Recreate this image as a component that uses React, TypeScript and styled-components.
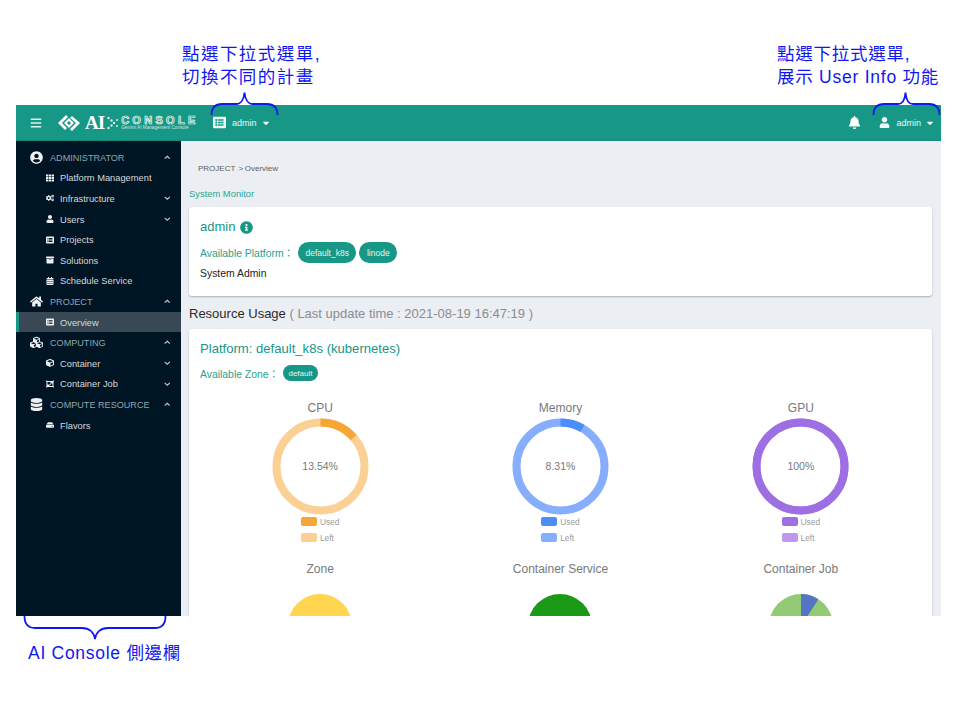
import React from "react";
import styled, { createGlobalStyle } from "styled-components";
import {
  FaBars, FaBell, FaCaretDown, FaChevronDown, FaChevronUp, FaCogs, FaCube, FaCubes, FaDatabase,
  FaHome, FaInfoCircle, FaListAlt, FaObjectGroup, FaTh, FaUser, FaUserCircle, FaArchive, FaCalendarAlt, FaHdd,
} from "react-icons/fa";

const TEAL = "#179786";
const INK = "#1018f0";
const SANS = `"Liberation Sans", "Noto Sans CJK TC", sans-serif`;

const Global = createGlobalStyle`
  html, body { margin: 0; padding: 0; background: #fff; }
  * { box-sizing: border-box; }
  body { font-family: ${SANS}; }
`;

const Page = styled.div`
  position: relative;
  width: 960px;
  height: 720px;
  overflow: hidden;
  background: #fff;
`;
const TopNotes = styled.div`
  height: 105px;
  display: flex;
  justify-content: space-between;
  padding: 43px 21px 0 182px;
`;
const Note = styled.div`
  color: ${INK};
  font-size: 17.5px;
  line-height: 23px;
  letter-spacing: 1.45px;
  white-space: pre-line;
`;
const RightNote = styled(Note)`
  width: 162px;
  letter-spacing: 0.75px;
  white-space: pre;
`;
const BottomNote = styled(Note)`
  padding: 26px 0 0 28px;
  letter-spacing: 0.72px;
`;
const Brace = styled.svg<{ $left: number; $top: number }>`
  position: absolute;
  left: ${(p) => p.$left}px;
  top: ${(p) => p.$top}px;
  z-index: 2;
  overflow: visible;
`;
const Frame = styled.div`
  margin: 0 19px 0 16px;
  height: 511px;
  display: flex;
  flex-direction: column;
  overflow: hidden;
`;
const Header = styled.header`
  height: 36px;
  flex: none;
  background: ${TEAL};
  display: flex;
  align-items: center;
  color: #fff;
  padding: 0 6px 0 14px;
  border-bottom: 1px solid #168c7c;
`;
const Burger = styled(FaBars)`
  width: 12px;
  height: 12px;
  color: #dff1ee;
  margin-right: 16px;
`;
const Logo = styled.div`
  display: flex;
  align-items: center;
  width: 156px;
  flex: none;
  margin-left: -1px;
`;
const LogoAI = styled.span`
  font-family: "Liberation Serif", serif;
  font-weight: 700;
  font-size: 19px;
  letter-spacing: -1px;
  margin: 0 3px 0 4px;
`;
const LogoWords = styled.div`
  display: flex;
  flex-direction: column;
  margin-left: 3px;
`;
const LogoTitle = styled.span`
  font-size: 11px;
  line-height: 10px;
  font-weight: 700;
  letter-spacing: 3.3px;
  color: transparent;
  -webkit-text-stroke: 0.7px #fff;
`;
const LogoSub = styled.span`
  font-size: 4.7px;
  line-height: 5px;
  color: #cfe9e4;
  white-space: nowrap;
`;
const Picker = styled.div`
  display: flex;
  align-items: center;
  font-size: 9px;
  color: #f0f8f7;
`;
const PickerIcon = styled(FaListAlt)`
  width: 13px;
  height: 13px;
  margin-right: 6px;
`;
const Caret = styled(FaCaretDown)`
  width: 10px;
  height: 10px;
  margin-left: 4px;
`;
const Spacer = styled.div`
  flex: 1;
`;
const Bell = styled(FaBell)`
  width: 13px;
  height: 13px;
  margin-right: 18px;
`;
const Avatar = styled(FaUser)`
  width: 11px;
  height: 11px;
  margin-right: 6px;
`;
const Body = styled.div`
  flex: 1;
  display: flex;
  min-height: 0;
`;
const Side = styled.nav`
  width: 165px;
  flex: none;
  background: #001524;
  padding-top: 6px;
`;
const Row = styled.div<{ $active?: boolean; $child?: boolean }>`
  height: 20.6px;
  display: flex;
  align-items: center;
  padding-left: ${(p) => (p.$child ? "29px" : "14px")};
  padding-right: 11px;
  border-left: ${(p) => (p.$active ? `3px solid ${TEAL}` : "0")};
  ${(p) => p.$active && "padding-left: 26px;"}
  background: ${(p) => (p.$active ? "#384955" : "transparent")};
  color: ${(p) => (p.$child ? "#d5d9dc" : "#8ea6b2")};
  font-size: ${(p) => (p.$child ? "9.3px" : "9.1px")};
  white-space: nowrap;
`;
const IconSlot = styled.span<{ $child?: boolean }>`
  width: ${(p) => (p.$child ? "10px" : "13px")};
  flex: none;
  margin-right: ${(p) => (p.$child ? "5px" : "7px")};
  display: flex;
  justify-content: center;
  color: #eef1f3;
  font-size: ${(p) => (p.$child ? "8px" : "13px")};
`;
const RowLabel = styled.span`
  flex: 1;
  padding-top: 1px;
`;
const Chevron = styled.span`
  color: #d5d9dc;
  font-size: 6.5px;
  display: flex;
`;
const Main = styled.main`
  flex: 1;
  min-width: 0;
  background: #ebeef3;
  padding: 22px 9px 0 8px;
`;
const Crumb = styled.div`
  font-size: 8px;
  line-height: 12px;
  color: #5a5e63;
  padding-left: 9px;
  word-spacing: -0.6px;
`;
const MonitorLink = styled.div`
  margin-top: 13px;
  font-size: 9.4px;
  line-height: 12px;
  color: #2ea594;
`;
const Card = styled.section`
  background: #fff;
  border-radius: 3px;
  box-shadow: 0 1px 2px rgba(0, 0, 0, 0.28);
`;
const ProfileCard = styled(Card)`
  margin-top: 7px;
  padding: 12px 11px 16px;
`;
const UsageCard = styled(Card)`
  margin-top: 7px;
  padding: 12px 11px 0;
`;
const CardName = styled.div`
  display: flex;
  align-items: center;
  font-size: 13px;
  line-height: 16px;
  color: ${TEAL};
`;
const InfoIcon = styled(FaInfoCircle)`
  width: 13px;
  height: 13px;
  margin-left: 5px;
`;
const ChipRow = styled.div`
  display: flex;
  align-items: center;
  margin-top: 7px;
  font-size: 10.4px;
  color: #2a9f8f;
`;
const ZoneRow = styled(ChipRow)`
  margin-top: 8px;
`;
const Chip = styled.span<{ $small?: boolean }>`
  height: ${(p) => (p.$small ? 16 : 21)}px;
  padding: 0 ${(p) => (p.$small ? 5.5 : 7.5)}px;
  border-radius: 11px;
  background: ${TEAL};
  color: #e6f5f2;
  font-size: ${(p) => (p.$small ? 8 : 8.5)}px;
  display: flex;
  align-items: center;
  margin-left: 3px;
`;
const ChipLabel = styled.span`
  margin-right: 1px;
`;
const Role = styled.div`
  margin-top: 5px;
  font-size: 10.4px;
  line-height: 12px;
  color: #222;
`;
const UsageHead = styled.div`
  margin-top: 10px;
  font-size: 13px;
  line-height: 16px;
  color: #2b2b2b;
`;
const UsageTime = styled.span`
  color: #8a8d90;
`;
const PlatformName = styled.div`
  font-size: 13.1px;
  line-height: 16px;
  color: ${TEAL};
`;
const Charts = styled.div`
  display: grid;
  grid-template-columns: repeat(3, 1fr);
  row-gap: 19px;
  margin-top: 19px;
`;
const Chart = styled.div`
  display: flex;
  flex-direction: column;
  align-items: center;
`;
const ChartTitle = styled.div`
  font-size: 12px;
  line-height: 14px;
  padding-top: 1px;
  color: #77797c;
`;
const DonutBox = styled.div`
  position: relative;
  width: 97px;
  height: 97px;
  margin-top: 3px;
`;
const DonutValue = styled.div`
  position: absolute;
  inset: 0 0 2px;
  display: flex;
  align-items: center;
  justify-content: center;
  font-size: 10.5px;
  color: #77797c;
`;
const Legend = styled.div`
  margin-top: 2px;
  display: grid;
  grid-auto-rows: 9px;
  row-gap: 7px;
`;
const LegendRow = styled.div`
  display: flex;
  align-items: center;
  font-size: 8.4px;
  color: #9a9c9e;
`;
const Swatch = styled.span<{ $color: string }>`
  width: 16px;
  height: 9px;
  border-radius: 2px;
  background: ${(p) => p.$color};
  margin-right: 3px;
`;
const PieSvg = styled.svg`
  margin-top: 18px;
  display: block;
`;

const ArcDonut = ({ used, usedColor, leftColor, label }: { used: number; usedColor: string; leftColor: string; label: string }) => {
  const r = 44;
  const c = 2 * Math.PI * r;
  return (
    <>
      <DonutBox>
        <svg width="97" height="97" viewBox="0 0 97 97">
          <circle cx="48.5" cy="48.5" r={r} fill="none" stroke={leftColor} strokeWidth="8" />
          <circle
            cx="48.5" cy="48.5" r={r} fill="none" stroke={usedColor} strokeWidth="8"
            strokeDasharray={`${c * used} ${c}`} transform="rotate(-90 48.5 48.5)"
          />
        </svg>
        <DonutValue>{label}</DonutValue>
      </DonutBox>
      <Legend>
        <LegendRow><Swatch $color={usedColor} />Used</LegendRow>
        <LegendRow><Swatch $color={leftColor} />Left</LegendRow>
      </Legend>
    </>
  );
};

const Logomark = () => (
  <svg width="24" height="18" viewBox="0 0 24 18" fill="none" stroke="#fff" strokeWidth="2.8">
    <path d="M10 2 3 9l6 6" />
    <path d="M14 3l7 6-7 7" />
    <path d="M8.5 9 12 5.5 15.5 9 12 12.5Z" strokeWidth="2" />
  </svg>
);
const LogoSpark = () => (
  <svg width="11" height="14" viewBox="0 0 11 14" fill="#d6eeea">
    <circle cx="1.5" cy="2" r="1.2" /><circle cx="1.5" cy="12" r="1.2" />
    <circle cx="4.5" cy="4.5" r="1.2" /><circle cx="4.5" cy="9.5" r="1.2" />
    <circle cx="7" cy="7" r="1.2" /><circle cx="10" cy="4" r="1" /><circle cx="10" cy="10" r="1" />
  </svg>
);

type Item = { label: string; icon: React.ReactNode; child?: boolean; chev?: "up" | "down"; active?: boolean };
const items: Item[] = [
  { label: "ADMINISTRATOR", icon: <FaUserCircle />, chev: "up" },
  { label: "Platform Management", icon: <FaTh />, child: true },
  { label: "Infrastructure", icon: <FaCogs />, child: true, chev: "down" },
  { label: "Users", icon: <FaUser />, child: true, chev: "down" },
  { label: "Projects", icon: <FaListAlt />, child: true },
  { label: "Solutions", icon: <FaArchive />, child: true },
  { label: "Schedule Service", icon: <FaCalendarAlt />, child: true },
  { label: "PROJECT", icon: <FaHome />, chev: "up" },
  { label: "Overview", icon: <FaListAlt />, child: true, active: true },
  { label: "COMPUTING", icon: <FaCubes />, chev: "up" },
  { label: "Container", icon: <FaCube />, child: true, chev: "down" },
  { label: "Container Job", icon: <FaObjectGroup />, child: true, chev: "down" },
  { label: "COMPUTE RESOURCE", icon: <FaDatabase />, chev: "up" },
  { label: "Flavors", icon: <FaHdd />, child: true },
];

export default function App() {
  return (
    <Page>
      <Global />
      <TopNotes>
        <Note>{"點選下拉式選單,\n切換不同的計畫"}</Note>
        <RightNote>{"點選下拉式選單,\n展示 User Info 功能"}</RightNote>
      </TopNotes>
      <Brace $left={211} $top={92} width="67" height="23" viewBox="0 0 67 23" fill="none" stroke={INK} strokeWidth="1.8">
        <path d="M0.5 23C0.5 16 4 12 11 12H25C30 12 33 7 33.5 0.5C34 7 37 12 42 12H56C63 12 66.5 16 66.5 23" />
      </Brace>
      <Brace $left={873} $top={92} width="67" height="23" viewBox="0 0 67 23" fill="none" stroke={INK} strokeWidth="1.8">
        <path d="M0.5 23C0.5 16 4 12 11 12H25C30 12 32 7 32.5 0.5C33 7 35 12 40 12H56C63 12 66.5 16 66.5 23" />
      </Brace>
      <Brace $left={24} $top={616} width="142" height="23" viewBox="0 0 142 23" fill="none" stroke={INK} strokeWidth="1.8">
        <path d="M0.5 0C0.5 8 4 12 11 12H58C65 12 70 16 71 23C72 16 77 12 84 12H131C138 12 141.5 8 141.5 0" />
      </Brace>
      <Frame>
        <Header>
          <Burger />
          <Logo>
            <Logomark />
            <LogoAI>AI</LogoAI>
            <LogoSpark />
            <LogoWords>
              <LogoTitle>CONSOLE</LogoTitle>
              <LogoSub>Gemini AI Management Console</LogoSub>
            </LogoWords>
          </Logo>
          <Picker><PickerIcon />admin<Caret /></Picker>
          <Spacer />
          <Bell />
          <Picker><Avatar />admin<Caret /></Picker>
        </Header>
        <Body>
          <Side>
            {items.map((it) => (
              <Row key={it.label} $child={it.child} $active={it.active}>
                <IconSlot $child={it.child}>{it.icon}</IconSlot>
                <RowLabel>{it.label}</RowLabel>
                {it.chev && <Chevron>{it.chev === "up" ? <FaChevronUp /> : <FaChevronDown />}</Chevron>}
              </Row>
            ))}
          </Side>
          <Main>
            <Crumb>PROJECT &nbsp;&gt; Overview</Crumb>
            <MonitorLink>System Monitor</MonitorLink>
            <ProfileCard>
              <CardName>admin<InfoIcon /></CardName>
              <ChipRow>
                <ChipLabel>Available Platform：</ChipLabel>
                <Chip>default_k8s</Chip>
                <Chip>linode</Chip>
              </ChipRow>
              <Role>System Admin</Role>
            </ProfileCard>
            <UsageHead>Resource Usage <UsageTime>( Last update time : 2021-08-19 16:47:19 )</UsageTime></UsageHead>
            <UsageCard>
              <PlatformName>Platform: default_k8s (kubernetes)</PlatformName>
              <ZoneRow>
                <ChipLabel>Available Zone：</ChipLabel>
                <Chip $small>default</Chip>
              </ZoneRow>
              <Charts>
                <Chart>
                  <ChartTitle>CPU</ChartTitle>
                  <ArcDonut used={0.1354} usedColor="#f5a634" leftColor="#fbd094" label="13.54%" />
                </Chart>
                <Chart>
                  <ChartTitle>Memory</ChartTitle>
                  <ArcDonut used={0.0831} usedColor="#4d8cfb" leftColor="#86aefc" label="8.31%" />
                </Chart>
                <Chart>
                  <ChartTitle>GPU</ChartTitle>
                  <ArcDonut used={1} usedColor="#9d6fe3" leftColor="#bd98ee" label="100%" />
                </Chart>
                <Chart>
                  <ChartTitle>Zone</ChartTitle>
                  <PieSvg width="64" height="64" viewBox="0 0 64 64"><circle cx="32" cy="32" r="32" fill="#ffd54f" /></PieSvg>
                </Chart>
                <Chart>
                  <ChartTitle>Container Service</ChartTitle>
                  <PieSvg width="64" height="64" viewBox="0 0 64 64"><circle cx="32" cy="32" r="32" fill="#1a9a16" /></PieSvg>
                </Chart>
                <Chart>
                  <ChartTitle>Container Job</ChartTitle>
                  <PieSvg width="64" height="64" viewBox="0 0 64 64">
                    <circle cx="32" cy="32" r="32" fill="#93cb75" />
                    <path d="M32 32V0A32 32 0 0 1 49.4 5.2Z" fill="#5574c4" />
                  </PieSvg>
                </Chart>
              </Charts>
            </UsageCard>
          </Main>
        </Body>
      </Frame>
      <BottomNote>AI Console 側邊欄</BottomNote>
    </Page>
  );
}
